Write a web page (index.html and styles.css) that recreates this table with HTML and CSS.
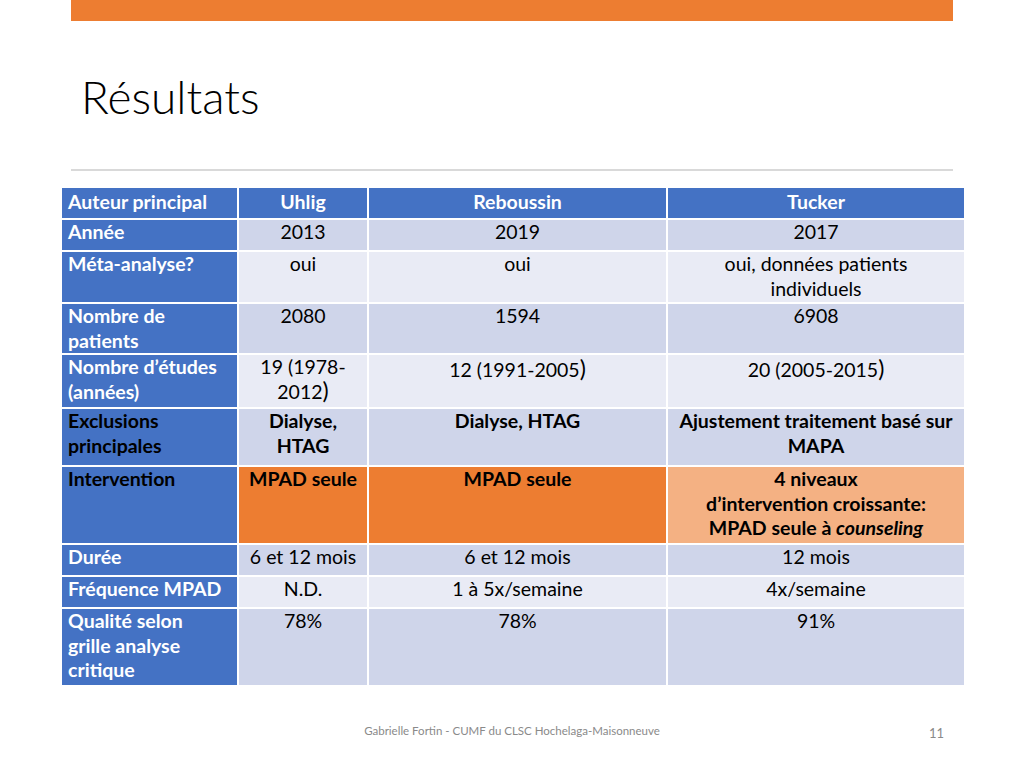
FILE: index.html
```html
<!DOCTYPE html>
<html lang="fr">
<head>
<meta charset="utf-8">
<title>Résultats</title>
<link rel="stylesheet" href="styles.css">
</head>
<body>
<div class="slide">
  <div class="topbar"></div>
  <h1 class="title">Résultats</h1>
  <div class="rule"></div>
  <table class="results">
    <colgroup>
      <col class="c1"><col class="c2"><col class="c3"><col class="c4">
    </colgroup>
    <tr class="r-head">
      <th class="lead">Auteur principal</th>
      <th>Uhlig</th>
      <th>Reboussin</th>
      <th>Tucker</th>
    </tr>
    <tr class="dark r32">
      <th class="lead">Année</th>
      <td>2013</td><td>2019</td><td>2017</td>
    </tr>
    <tr class="light r52">
      <th class="lead">Méta-analyse?</th>
      <td>oui</td><td>oui</td><td>oui, données patients<br>individuels</td>
    </tr>
    <tr class="dark r51">
      <th class="lead">Nombre de<br>patients</th>
      <td>2080</td><td>1594</td><td>6908</td>
    </tr>
    <tr class="light r54">
      <th class="lead">Nombre d’études<br>(années)</th>
      <td>19 (1978-<br>2012<span class="paren">)</span></td>
      <td class="mid">12 (1991-2005<span class="paren">)</span></td>
      <td class="mid">20 (2005-2015<span class="paren">)</span></td>
    </tr>
    <tr class="dark r58">
      <th class="lead dark-text">Exclusions<br>principales</th>
      <td class="b">Dialyse,<br>HTAG</td>
      <td class="b">Dialyse, HTAG</td>
      <td class="b">Ajustement traitement basé sur<br>MAPA</td>
    </tr>
    <tr class="r78">
      <th class="lead dark-text">Intervention</th>
      <td class="b orange">MPAD seule</td>
      <td class="b orange">MPAD seule</td>
      <td class="b peach">4 niveaux<br>d’intervention croissante:<br>MPAD seule à <i>counseling</i></td>
    </tr>
    <tr class="dark r32">
      <th class="lead">Durée</th>
      <td>6 et 12 mois</td><td>6 et 12 mois</td><td>12 mois</td>
    </tr>
    <tr class="light r32">
      <th class="lead">Fréquence MPAD</th>
      <td>N.D.</td><td>1 à 5x/semaine</td><td>4x/semaine</td>
    </tr>
    <tr class="dark r78">
      <th class="lead">Qualité selon<br>grille analyse<br>critique</th>
      <td>78%</td><td>78%</td><td>91%</td>
    </tr>
  </table>
  <div class="footer">
    <span class="credit">Gabrielle Fortin - CUMF du CLSC Hochelaga-Maisonneuve</span>
    <span class="pagenum">11</span>
  </div>
</div>
</body>
</html>
```

FILE: styles.css
```css
* { box-sizing: border-box; }

html, body {
  margin: 0;
  padding: 0;
  background: #ffffff;
}

.slide {
  width: 1024px;
  height: 768px;
  position: relative;
  overflow: hidden;
  font-family: Lato, "Open Sans", "Liberation Sans", sans-serif;
  color: #000000;
}

.topbar {
  height: 21px;
  margin: 0 71px;
  background: #ED7D31;
}

.title {
  margin: 0;
  padding: 48px 0 0 81px;
  height: 148px;
  font-family: Lato, "Liberation Sans", sans-serif;
  font-weight: 300;
  font-size: 46px;
  line-height: 56px;
  color: #000000;
}

.rule {
  height: 2px;
  margin: 0 71px;
  background: #d9d9d9;
}

.results {
  margin: 15px 0 0 60px;
  width: 904px;
  table-layout: fixed;
  border-collapse: collapse;
  font-size: 19.5px;
  line-height: 24.5px;
}

.results .c1 { width: 177px; }
.results .c2 { width: 130px; }
.results .c3 { width: 299px; }
.results .c4 { width: 298px; }

.results th,
.results td {
  border: 2px solid #ffffff;
  padding: 0 6px;
  vertical-align: top;
  text-align: center;
  white-space: nowrap;
  font-weight: 400;
}

.results th.lead {
  text-align: left;
  font-weight: 700;
  color: #ffffff;
  background: #4472C4;
}

.results th.lead.dark-text { color: #000000; }

.r-head { height: 32px; }
.r-head th {
  background: #4472C4;
  color: #ffffff;
  font-weight: 700;
  vertical-align: middle;
  padding-top: 0;
  padding-bottom: 2px;
}

.r32 { height: 32px; }
.r51 { height: 51px; }
.r52 { height: 52px; }
.r54 { height: 54px; }
.r58 { height: 58px; }
.r78 { height: 78px; }

.dark td { background: #CFD5EA; }
.light td { background: #E9EBF5; }

.results td.b { font-weight: 700; }
.results td.orange { background: #ED7D31; }
.results td.peach { background: #F4B183; }
.results td.mid { padding-top: 3px; }

.paren { font-size: 23px; line-height: 20px; }

.footer {
  position: absolute;
  left: 0;
  right: 0;
  top: 722px;
  height: 20px;
}

.credit {
  display: block;
  text-align: center;
  font-size: 11.5px;
  line-height: 18px;
  color: #8a8a8a;
}

.pagenum {
  position: absolute;
  right: 80px;
  top: 2px;
  font-size: 13px;
  line-height: 18px;
  color: #8a8a8a;
}
```
